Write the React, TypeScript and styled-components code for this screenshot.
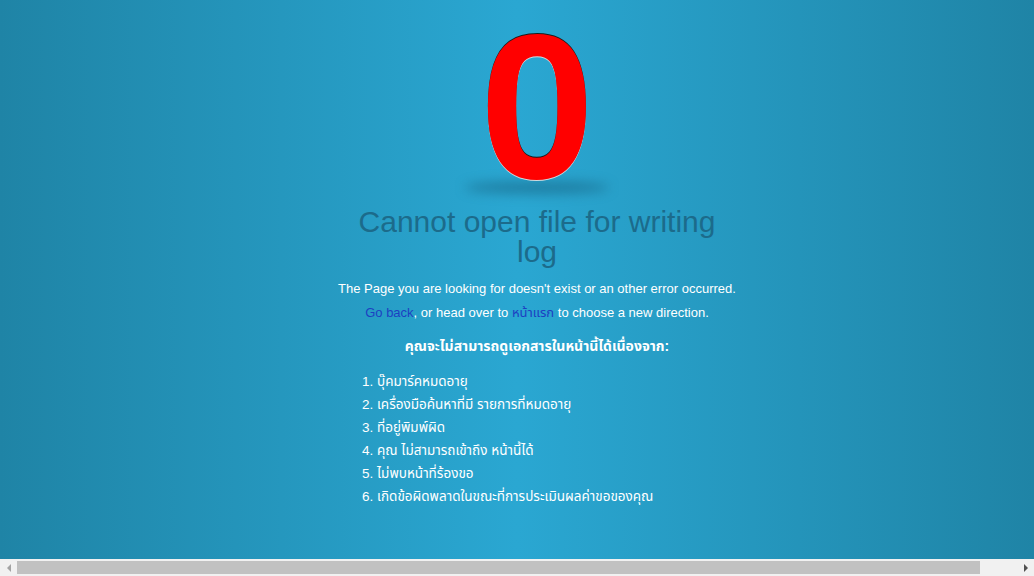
import styled, { createGlobalStyle } from "styled-components";

const GlobalStyle = createGlobalStyle`
  html,
  body {
    margin: 0;
    padding: 0;
    height: 100%;
    overflow: hidden;
  }

  body {
    background: linear-gradient(to right, #1f84a6 0%, #2aa7d2 50%, #1f84a6 100%);
    font-family: "Liberation Sans", Arial, "Noto Sans Thai", "Noto Sans", sans-serif;
    color: #ffffff;
  }
`;

const reasons = [
  "บุ๊คมาร์คหมดอายุ",
  "เครื่องมือค้นหาที่มี รายการที่หมดอายุ",
  "ที่อยู่พิมพ์ผิด",
  "คุณ ไม่สามารถเข้าถึง หน้านี้ได้",
  "ไม่พบหน้าที่ร้องขอ",
  "เกิดข้อผิดพลาดในขณะที่การประเมินผลค่าขอของคุณ",
];

const App = () => {
  return (
    <>
      <GlobalStyle />
      <Screen>
        <Viewport>
          <Page>
            <Content>
              <Code>
                <Digit>0</Digit>
                <Shadow />
              </Code>
              <Title>Cannot open file for writing log</Title>
              <Text>
                The Page you are looking for doesn't exist or an other error
                occurred.
              </Text>
              <Text>
                <Link href="#">Go back</Link>, or head over to{" "}
                <Link href="#">หน้าแรก</Link> to choose a new direction.
              </Text>
              <Reasons>
                <ReasonsTitle>
                  คุณจะไม่สามารถดูเอกสารในหน้านี้ได้เนื่องจาก:
                </ReasonsTitle>
                <ReasonList>
                  {reasons.map((reason) => (
                    <Reason key={reason}>{reason}</Reason>
                  ))}
                </ReasonList>
              </Reasons>
            </Content>
          </Page>
        </Viewport>
        <ScrollBar>
          <ScrollArrow $dir="left" />
          <ScrollTrack>
            <ScrollThumb />
          </ScrollTrack>
          <ScrollArrow $dir="right" />
        </ScrollBar>
      </Screen>
    </>
  );
};

const Screen = styled.div`
  height: 100vh;
  display: flex;
  flex-direction: column;
`;

const Viewport = styled.div`
  flex: 1;
  min-height: 0;
  overflow: hidden;
`;

const Page = styled.div`
  width: 100%;
  padding: 0 20px;
  box-sizing: content-box;
`;

const Content = styled.div`
  width: 400px;
  margin: 0 auto;
  text-align: center;
`;

const Code = styled.div`
  position: relative;
  padding-top: 4px;
`;

const Digit = styled.div`
  position: relative;
  z-index: 1;
  font-size: 206px;
  line-height: 206px;
  font-weight: bold;
  color: #ff0000;
  text-shadow: 0 -1px 0 #1a1a1a, 0 1px 0 #cfd8dc;
`;

const Shadow = styled.div`
  position: absolute;
  left: 128px;
  bottom: 16px;
  width: 144px;
  height: 13px;
  border-radius: 50%;
  background: rgba(20, 90, 120, 0.5);
  filter: blur(6px);
`;

const Title = styled.h1`
  margin: -3px 0 10px;
  font-size: 30px;
  line-height: 30px;
  font-weight: normal;
  color: #1c6b8b;
`;

const Text = styled.p`
  margin: 0;
  font-size: 13px;
  line-height: 24px;
`;

const Link = styled.a`
  color: #1d3fc2;
  text-decoration: none;
`;

const Reasons = styled.div`
  margin-top: 9px;
  text-align: left;
`;

const ReasonsTitle = styled.h4`
  margin: 0 0 12px;
  font-size: 14px;
  line-height: 24px;
  font-weight: bold;
  text-align: center;
`;

const ReasonList = styled.ol`
  margin: 0;
  padding-left: 40px;
  font-size: 13.5px;
  line-height: 23px;
`;

const Reason = styled.li``;

const ScrollBar = styled.div`
  flex: 0 0 17px;
  display: flex;
  align-items: center;
  background: #f1f1f1;
`;

const ScrollArrow = styled.div<{ $dir: "left" | "right" }>`
  flex: 0 0 17px;
  height: 17px;
  display: flex;
  align-items: center;
  justify-content: center;

  &::before {
    content: "";
    width: 0;
    height: 0;
    border-top: 4px solid transparent;
    border-bottom: 4px solid transparent;
    ${({ $dir }) =>
      $dir === "left"
        ? "border-right: 4px solid #a3a3a3;"
        : "border-left: 4px solid #505050;"}
  }
`;

const ScrollTrack = styled.div`
  flex: 1;
  height: 13px;
`;

const ScrollThumb = styled.div`
  width: 963px;
  height: 100%;
  background: #c1c1c1;
`;

export default App;
